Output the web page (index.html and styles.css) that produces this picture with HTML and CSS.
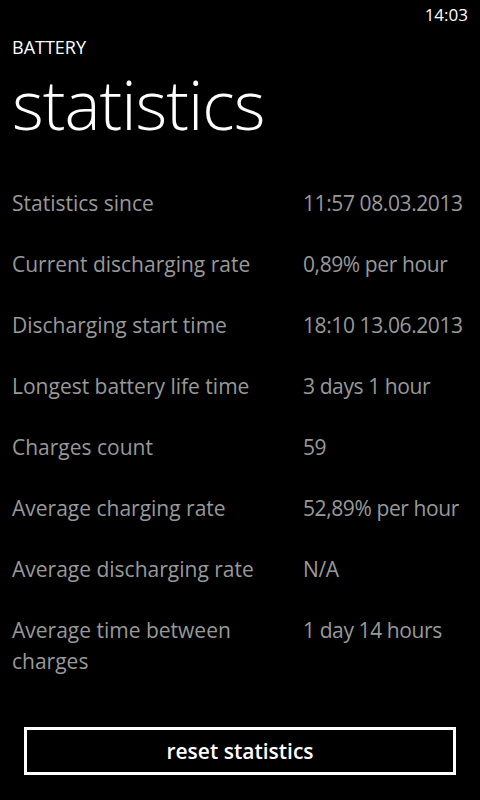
FILE: index.html
```html
<!DOCTYPE html>
<html>
<head>
<meta http-equiv="Content-Type" content="text/html; charset=utf-8"/>
<title>statistics</title>
<link rel="stylesheet" href="styles.css">
</head>
<body>
<div class="statusbar">14:03</div>

<div class="header">
  <div class="appname">BATTERY</div>
  <h1 class="pagetitle">statistics</h1>
</div>

<div class="stats">
  <div class="label">Statistics since</div>
  <div class="value">11:57 08.03.2013</div>

  <div class="label">Current discharging rate</div>
  <div class="value">0,89% per hour</div>

  <div class="label">Discharging start time</div>
  <div class="value">18:10 13.06.2013</div>

  <div class="label">Longest battery life time</div>
  <div class="value">3 days 1 hour</div>

  <div class="label">Charges count</div>
  <div class="value">59</div>

  <div class="label">Average charging rate</div>
  <div class="value">52,89% per hour</div>

  <div class="label">Average discharging rate</div>
  <div class="value">N/A</div>

  <div class="label">Average time between charges</div>
  <div class="value">1 day 14 hours</div>
</div>

<div class="footer">
  <button class="reset">reset statistics</button>
</div>
</body>
</html>
```
FILE: styles.css
```css
html, body {
   background-color: black;
}

body {
   margin: 0;
   width: 480px;
   height: 800px;
   color: white;
   font-family: 'Open Sans', 'Noto Sans', sans-serif;
   display: flex;
   flex-direction: column;
}

.statusbar {
   height: 32px;
   padding-right: 12px;
   text-align: right;
   font-size: 17px;
   line-height: 30px;
}

.header {
   padding: 0 12px;
}

.appname {
   font-size: 18px;
   line-height: 28px;
   padding-top: 1px;
}

.pagetitle {
   margin: 0;
   font-size: 68px;
   font-weight: 300;
   line-height: 86px;
   letter-spacing: -1px;
}

.stats {
   display: grid;
   grid-template-columns: 291px 1fr;
   row-gap: 30px;
   padding: 41px 12px 0 12px;
   color: #999;
   font-size: 21px;
   line-height: 31px;
}

.label {
   padding-right: 12px;
}

.value {
   white-space: nowrap;
   letter-spacing: -0.4px;
}

.footer {
   margin-top: auto;
   padding: 0 24px 25px 24px;
}

.reset {
   width: 100%;
   height: 48px;
   background: black;
   color: white;
   border: 3px solid white;
   font-family: inherit;
   font-size: 21px;
   font-weight: 600;
}
```
